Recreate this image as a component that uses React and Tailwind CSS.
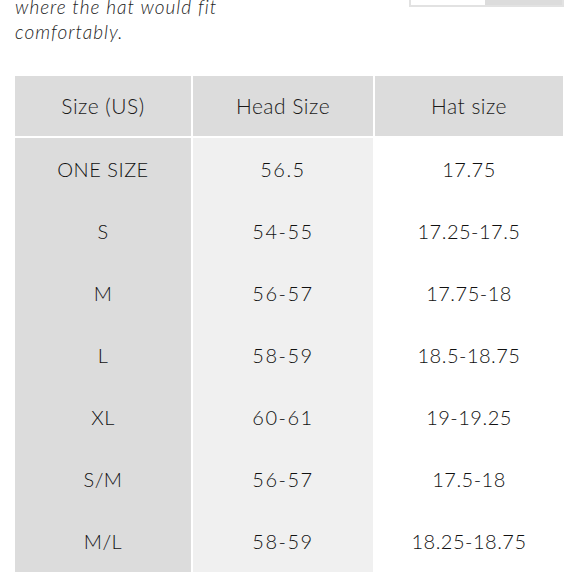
export default function App() {
  const rows = [
    ["ONE SIZE", "56.5", "17.75"],
    ["S", "54-55", "17.25-17.5"],
    ["M", "56-57", "17.75-18"],
    ["L", "58-59", "18.5-18.75"],
    ["XL", "60-61", "19-19.25"],
    ["S/M", "56-57", "17.5-18"],
    ["M/L", "58-59", "18.25-18.75"],
  ];
  const cols = "grid grid-cols-[176px_180px_188px] gap-x-[2px]";

  return (
    <div className="relative w-[580px] h-[580px] overflow-hidden bg-white font-['Lato',sans-serif] font-light text-[#111]">
      {/* unit switch, cut off */}
      <div className="absolute right-[16px] -top-[30px] flex h-[37px] w-[155px] border-2 border-[#e2e2e2]">
        <div className="w-[74px] bg-white"></div>
        <div className="flex-1 bg-[#dcdcdc]"></div>
      </div>

      {/* intro text, cut off at top */}
      <div className="pl-[15px] pt-px -mt-[7px] italic text-[19px] leading-[25px] tracking-[1px] text-[#222]">
        <p>where the hat would fit</p>
        <p>comfortably.</p>
      </div>

      <div className="ml-[15px] mt-[32px]">
        <div className={`${cols} h-[60px] text-[21px] tracking-[0.5px] text-[#1a1a1a]`}>
          <div className="bg-[#dcdcdc] flex items-center justify-center">Size (US)</div>
          <div className="bg-[#dcdcdc] flex items-center justify-center">Head Size</div>
          <div className="bg-[#dcdcdc] flex items-center justify-center">Hat size</div>
        </div>
        <div className={`${cols} mt-[2px] text-[20px] tracking-[0.5px]`}>
          <div className="bg-[#dcdcdc]">
            {rows.map((r) => (
              <div key={r[0]} className="h-[62px] flex items-center justify-center">{r[0]}</div>
            ))}
          </div>
          <div className="bg-[#f0f0f0]">
            {rows.map((r, i) => (
              <div key={i} className="h-[62px] flex items-center justify-center tracking-[1.5px]">{r[1]}</div>
            ))}
          </div>
          <div>
            {rows.map((r, i) => (
              <div key={i} className="h-[62px] flex items-center justify-center">{r[2]}</div>
            ))}
          </div>
        </div>
      </div>
    </div>
  );
}
